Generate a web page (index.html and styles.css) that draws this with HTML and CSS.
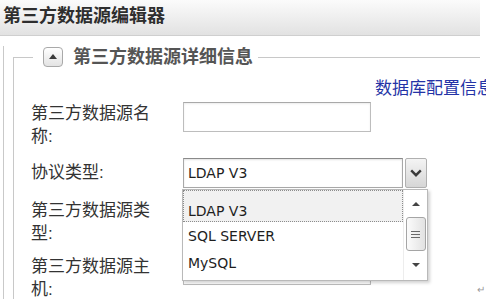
FILE: index.html
```html
<!DOCTYPE html>
<html>
<head>
  <title>第三方数据源编辑器</title>
  <link rel="stylesheet" href="styles.css">
</head>
<body>
  <div class="editor">
    <!-- Title bar -->
    <div class="editor-title">第三方数据源编辑器</div>

    <div class="editor-body">
      <fieldset class="detail">
        <legend><span class="toggle"><span class="toggle-arrow"></span></span>第三方数据源详细信息</legend>

        <div class="db-link"><a href="#">数据库配置信息</a></div>

        <div class="form-row">
          <label class="field-label" for="dsName">第三方数据源名称:</label>
          <input class="text-input" type="text" id="dsName">
        </div>

        <!-- Protocol combo, shown with its list open -->
        <div class="form-row row-combo">
          <label class="field-label single">协议类型:</label>
          <div class="combo">
            <div class="combo-field">LDAP V3</div>
            <div class="combo-btn">
              <svg width="12" height="8" viewBox="0 0 12 8"><path d="M1.2 1.4 L6 6.2 L10.8 1.4" fill="none" stroke="#3a3a3a" stroke-width="2.4"/></svg>
            </div>
            <div class="combo-list">
              <div class="combo-options">
                <div class="option selected">LDAP V3</div>
                <div class="option">SQL SERVER</div>
                <div class="option">MySQL</div>
              </div>
              <div class="combo-scroll">
                <span class="arrow-up"></span>
                <span class="thumb">
                  <svg width="9" height="9" viewBox="0 0 9 9"><path d="M0 1.5 H9 M0 4.5 H9 M0 7.5 H9" stroke="#6a6a6a" stroke-width="1"/></svg>
                </span>
                <span class="arrow-down"></span>
              </div>
            </div>
          </div>
        </div>

        <div class="form-row">
          <label class="field-label" for="dsType">第三方数据源类型:</label>
          <input class="text-input" type="text" id="dsType">
        </div>

        <div class="form-row">
          <label class="field-label" for="dsHost">第三方数据源主机:</label>
          <input class="text-input" type="text" id="dsHost">
          <span class="para-mark">↵</span>
        </div>
      </fieldset>
    </div>
  </div>
</body>
</html>
```

FILE: styles.css
```css
/* Global */
html, body {
  margin: 0;
  height: 299px;
  overflow: hidden;
  background-color: #fff;
}
body {
  font-family: "Liberation Sans", "Noto Sans CJK SC", sans-serif;
  color: #333;
}
.editor {
  width: 480px;
}
/* Title bar */
.editor-title {
  height: 35px;
  line-height: 33px;
  padding-left: 3px;
  font-size: 18px;
  font-weight: bold;
  color: #2e2e2e;
  background: linear-gradient(#fbfbfb, #e2e2e2);
  border-bottom: 1px solid #cfcfcf;
}
.editor-body {
  margin-left: 3px;
  border-left: 1px solid #c9c9c9;
  padding-left: 9px;
  height: 263px;
}
/* Detail group */
.detail {
  margin: 10px 0 0;
  padding: 10px 0 0 17px;
  border: 1px solid #c8c8c8;
  border-right: none;
  border-bottom: none;
  min-width: 0;
}
.detail legend {
  display: flex;
  align-items: center;
  height: 22px;
  margin-left: 2px;
  padding: 0 5px 0 10px;
  font-size: 18px;
  font-weight: bold;
  line-height: 20px;
  color: #555;
}
.toggle {
  display: flex;
  align-items: center;
  justify-content: center;
  width: 18px;
  height: 18px;
  margin-right: 10px;
  border: 1px solid #a9a9a9;
  border-radius: 4px;
  background: linear-gradient(#ffffff, #e3e3e3);
}
.toggle-arrow {
  width: 0;
  height: 0;
  border-left: 4px solid transparent;
  border-right: 4px solid transparent;
  border-bottom: 5px solid #3c3c3c;
  margin-top: -1px;
}
.db-link {
  height: 22px;
  margin-bottom: 2px;
  padding-left: 344px;
  line-height: 22px;
  font-size: 17px;
  white-space: nowrap;
}
.db-link a {
  color: #2433a6;
  text-decoration: none;
}
/* Form rows */
.form-row {
  display: flex;
  align-items: flex-start;
  margin-bottom: 10px;
}
.row-combo {
  height: 31px;
}
.field-label {
  width: 128px;
  margin-right: 24px;
  font-size: 17px;
  line-height: 23px;
  color: #333;
}
.field-label.single {
  line-height: 30px;
}
.text-input {
  width: 188px;
  height: 30px;
  margin: 0;
  padding: 0 4px;
  box-sizing: border-box;
  border: 1px solid #bdbdbd;
  border-top-color: #a9a9a9;
  box-shadow: inset 0 1px 2px rgba(0, 0, 0, 0.08);
}
.para-mark {
  margin: 30px -5px 0 auto;
  font-size: 10px;
  line-height: 10px;
  color: #999;
}
/* Combo box */
.combo {
  position: relative;
  display: flex;
  gap: 2px;
  font-family: "DejaVu Sans", sans-serif;
  font-size: 14px;
  color: #1e1e1e;
}
.combo-field {
  width: 220px;
  height: 30px;
  box-sizing: border-box;
  padding-left: 4px;
  border: 1px solid #a8a8a8;
  border-top-color: #8a8a8a;
  line-height: 28px;
  box-shadow: inset 0 1px 2px rgba(0, 0, 0, 0.12);
}
.combo-btn {
  display: flex;
  align-items: center;
  justify-content: center;
  width: 22px;
  height: 30px;
  box-sizing: border-box;
  border: 1px solid #b0b0b0;
  border-radius: 2px;
  background: linear-gradient(#f4f4f4, #d6d6d6);
}
.combo-list {
  position: absolute;
  top: 31px;
  left: -1px;
  width: 246px;
  height: 92px;
  box-sizing: border-box;
  display: flex;
  border: 1px solid #b9b9b9;
  background-color: #fff;
  box-shadow: 2px 2px 3px rgba(0, 0, 0, 0.18);
}
.combo-options {
  flex: 1;
}
.option {
  padding: 2px 0 0 5px;
  line-height: 25px;
}
.option.selected {
  height: 32px;
  box-sizing: border-box;
  padding: 11px 0 0 4px;
  line-height: 18px;
  border: 1px dotted #8c8c8c;
  background-color: #f1f1f1;
}
.combo-scroll {
  width: 23px;
  display: flex;
  flex-direction: column;
  align-items: center;
  padding-top: 12px;
  border-left: 1px solid #ededed;
}
.arrow-up,
.arrow-down {
  width: 0;
  height: 0;
  border-left: 4px solid transparent;
  border-right: 4px solid transparent;
}
.arrow-up {
  border-bottom: 4px solid #444;
}
.arrow-down {
  margin-top: 12px;
  border-top: 4px solid #444;
}
.thumb {
  display: flex;
  align-items: center;
  justify-content: center;
  width: 18px;
  height: 32px;
  margin-top: 11px;
  border: 1px solid #a5a5a5;
  border-radius: 3px;
  background: linear-gradient(90deg, #fbfbfb, #e2e2e2);
}
```
